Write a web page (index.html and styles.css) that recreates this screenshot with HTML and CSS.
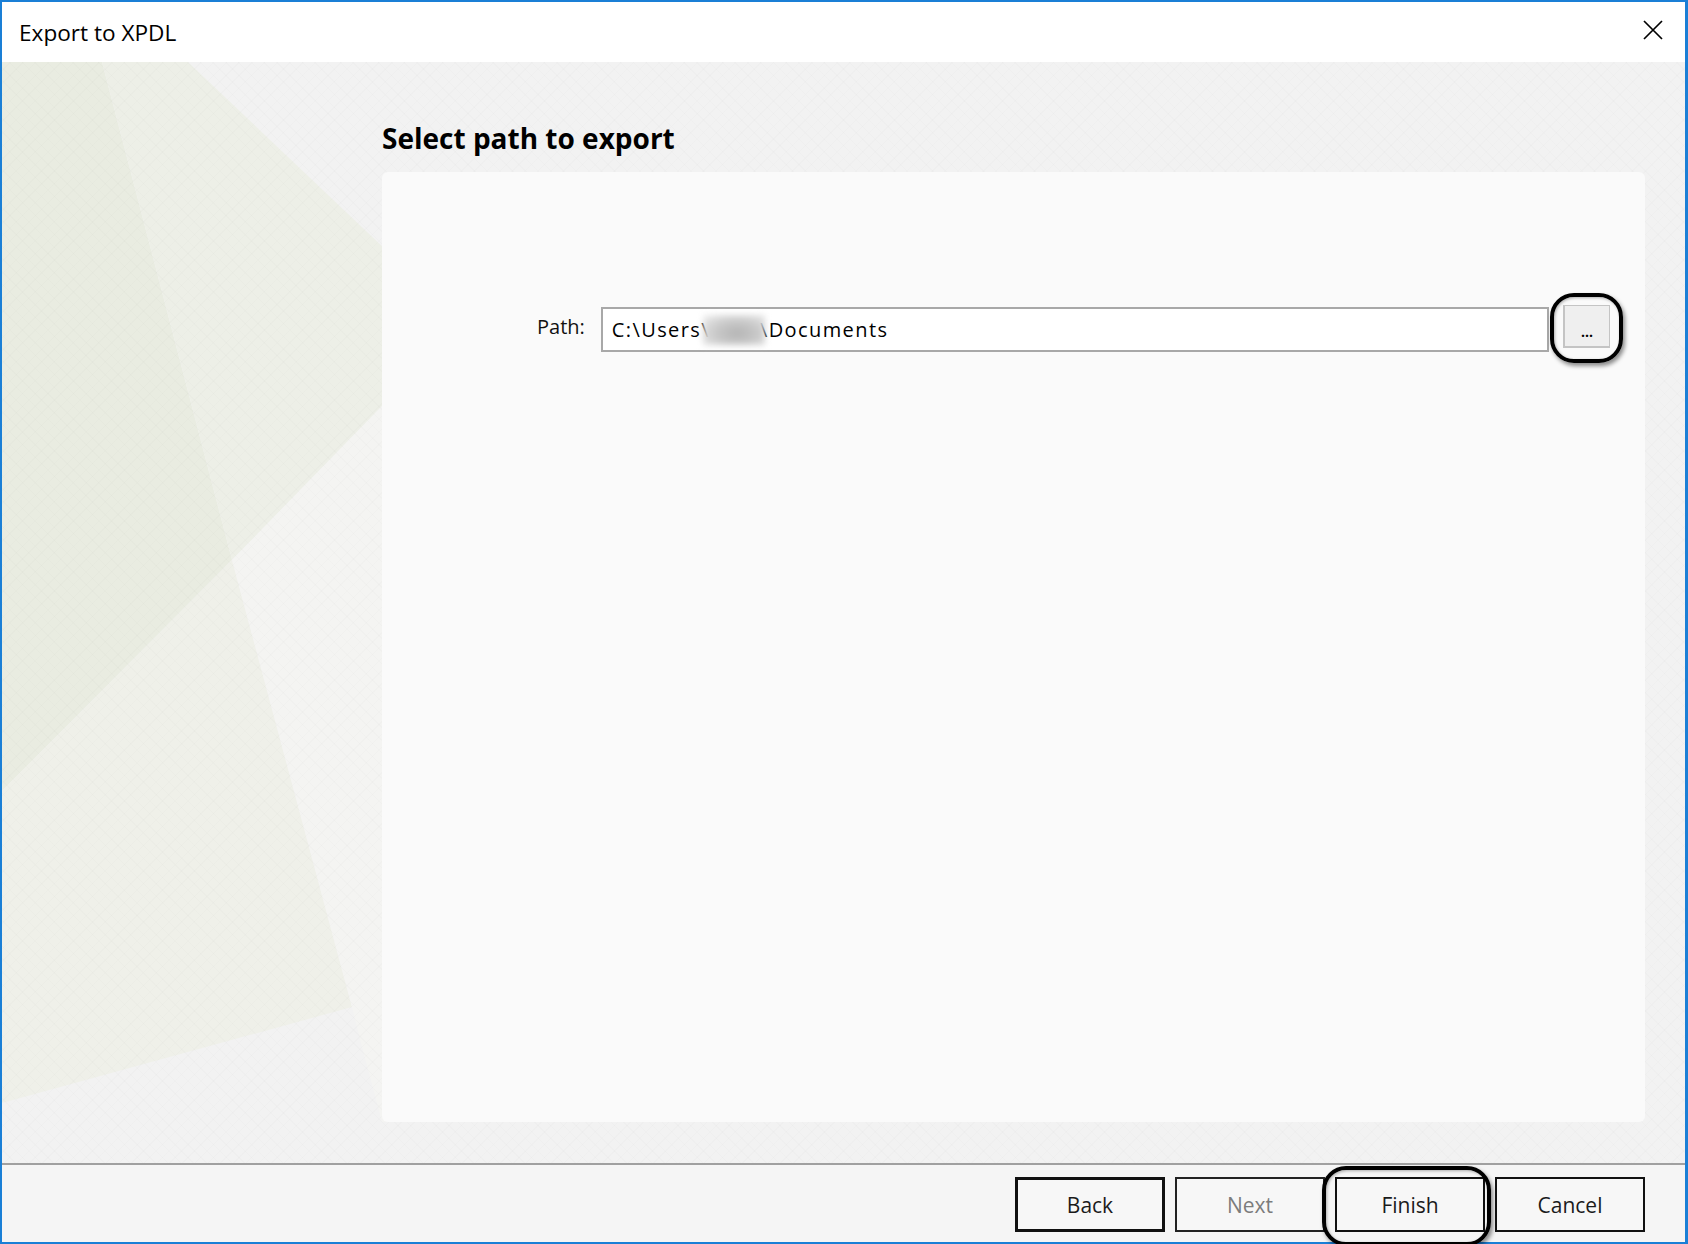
FILE: index.html
```html
<!DOCTYPE html>
<html lang="en">
<head>
<meta charset="utf-8">
<title>Export to XPDL</title>
<link rel="stylesheet" href="styles.css">
</head>
<body>
<div class="window">
  <header class="titlebar">
    <span class="title">Export to XPDL</span>
    <svg class="close" width="20" height="20" viewBox="0 0 20 20" aria-label="Close">
      <path d="M1 1 L19 19 M19 1 L1 19" stroke="#000" stroke-width="1.7" fill="none"/>
    </svg>
  </header>
  <main class="body">
    <svg class="decor" viewBox="0 0 1683 1101" preserveAspectRatio="none" aria-hidden="true">
      <polygon points="0,0 100,0 230,498 0,729" fill="#e9ece1"/>
      <polygon points="100,0 186,0 461,261 230,498" fill="#edefe7"/>
      <polygon points="0,729 230,498 350,945 0,1041" fill="#eff0e9"/>
      <polygon points="230,498 461,261 461,1060 380,1060 360,985 350,945" fill="#f4f4f2"/>
    </svg>
    <div class="content">
      <h1 class="heading">Select path to export</h1>
      <section class="panel">
        <div class="path-row">
          <span class="path-label">Path:</span>
          <div class="textbox"><span>C:\Users\</span><span class="redacted"></span><span>\Documents</span></div>
          <div class="browse-wrap">
            <button class="browse">...</button>
            <span class="ring ring-browse"></span>
          </div>
        </div>
      </section>
    </div>
  </main>
  <div class="separator"></div>
  <footer class="footer">
    <button class="btn btn-default">Back</button>
    <button class="btn btn-disabled">Next</button>
    <div class="btn-wrap">
      <button class="btn">Finish</button>
      <span class="ring ring-finish"></span>
    </div>
    <button class="btn">Cancel</button>
  </footer>
</div>
</body>
</html>
```
FILE: styles.css
```css
html, body {
  margin: 0;
  padding: 0;
  overflow: hidden;
}
body {
  font-family: "Open Sans", "Noto Sans", "Liberation Sans", sans-serif;
  color: #000;
  background: #fff;
}
.window {
  width: 1688px;
  height: 1244px;
  box-sizing: border-box;
  border: 2px solid #1a7fd6;
  border-right-width: 3px;
  display: flex;
  flex-direction: column;
}
.titlebar {
  height: 60px;
  flex: none;
  background: #fff;
  display: flex;
  align-items: center;
  justify-content: space-between;
  padding: 0 22px 0 17px;
}
.title {
  font-size: 22.6px;
  line-height: 31px;
  color: #000;
}
.close {
  display: block;
  margin-top: -5px;
}
.body {
  flex: 1;
  position: relative;
  background: #f2f2f2;
  overflow: hidden;
}
.decor {
  position: absolute;
  left: 0;
  top: 0;
  width: 100%;
  height: 100%;
}
.body::after {
  content: "";
  position: absolute;
  inset: 0;
  pointer-events: none;
  background:
    repeating-linear-gradient(45deg, rgba(0,0,0,0.012) 0 1px, transparent 1px 9px),
    repeating-linear-gradient(-45deg, rgba(0,0,0,0.012) 0 1px, transparent 1px 9px);
}
.content {
  position: relative;
  z-index: 1;
  padding: 57px 40px 0 380px;
}
.heading {
  margin: 0 0 15px;
  font-size: 28px;
  line-height: 38px;
  font-weight: 700;
  color: #000;
}
.panel {
  height: 950px;
  box-sizing: border-box;
  background: #fafafa;
  border-radius: 6px;
  padding-top: 135px;
}
.path-row {
  display: flex;
  align-items: flex-start;
  padding: 0 35px 0 155px;
}
.path-label {
  font-size: 20px;
  line-height: 27px;
  margin-top: 6px;
  margin-right: 16px;
  color: #111;
}
.textbox {
  flex: 1;
  height: 45px;
  box-sizing: border-box;
  border: 2px solid #a8a8a8;
  background: #fff;
  padding-left: 9px;
  font-size: 20px;
  line-height: 41px;
  letter-spacing: 1.4px;
  white-space: nowrap;
  display: flex;
  align-items: center;
  color: #000;
}
.redacted {
  display: inline-block;
  width: 62px;
  height: 30px;
  margin: 0 -5px 0 -7px;
  background: radial-gradient(ellipse at 55% 60%, #b4b4b4 0%, #c9c9c9 45%, #e2e2e2 80%, rgba(240,240,240,0.6) 100%);
  filter: blur(3px);
}
.browse-wrap {
  position: relative;
  margin-left: 14px;
  margin-top: -2px;
}
.browse {
  display: block;
  width: 47px;
  height: 43px;
  box-sizing: border-box;
  background: #efefef;
  border: 1px solid #c4c4c4;
  border-width: 1px 1px 2px 2px;
  font-family: "Open Sans", sans-serif;
  font-weight: 700;
  font-size: 14px;
  padding: 10px 0 0;
  color: #000;
}
.ring {
  position: absolute;
  box-sizing: border-box;
  border: 4px solid #000;
  border-radius: 24px;
  box-shadow: 2px 3px 4px rgba(0,0,0,0.45), inset 1px 1px 3px rgba(0,0,0,0.3);
  pointer-events: none;
}
.ring-browse {
  left: -13px;
  top: -12px;
  width: 73px;
  height: 70px;
}
.separator {
  height: 2px;
  flex: none;
  background: #a0a0a0;
}
.footer {
  height: 77px;
  flex: none;
  box-sizing: border-box;
  background: #f5f5f5;
  display: flex;
  justify-content: flex-end;
  align-items: flex-start;
  gap: 10px;
  padding: 12px 40px 0 0;
}
.btn {
  display: block;
  width: 150px;
  height: 55px;
  box-sizing: border-box;
  background: #f7f7f7;
  border: 2px solid #111;
  font-family: "Open Sans", sans-serif;
  font-size: 21px;
  color: #1b1b1b;
  padding: 0;
}
.btn-default {
  border-width: 3px;
}
.btn-disabled {
  color: #7c7c7c;
  border-color: #222;
}
.btn-wrap {
  position: relative;
}
.ring-finish {
  left: -13px;
  top: -11px;
  width: 169px;
  height: 80px;
}
```
